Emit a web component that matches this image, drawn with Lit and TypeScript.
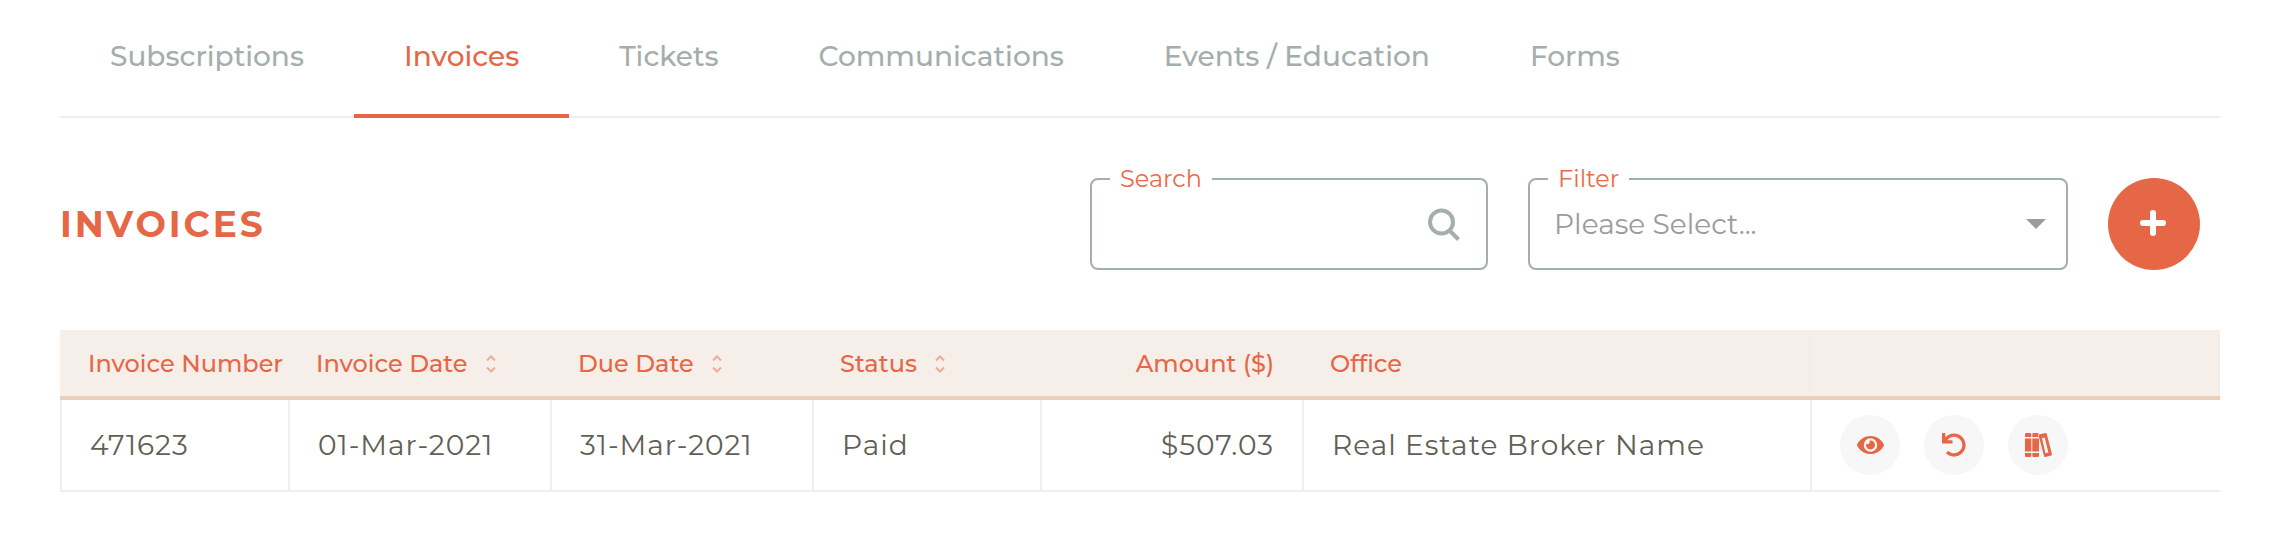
import { LitElement, html, css, svg } from "lit";
import { customElement, state } from "lit/decorators.js";
import { classMap } from "lit/directives/class-map.js";

const eye = svg`<path d="M572.52 241.4C518.29 135.59 410.93 64 288 64S57.68 135.64 3.48 241.41a32.35 32.35 0 0 0 0 29.19C57.71 376.41 165.07 448 288 448s230.32-71.64 284.52-177.41a32.35 32.35 0 0 0 0-29.19zM288 400a144 144 0 1 1 144-144 143.93 143.93 0 0 1-144 144zm0-240a95.31 95.31 0 0 0-25.31 3.79 47.85 47.85 0 0 1-66.9 66.9A95.78 95.78 0 1 0 288 160z"/>`;
const undo = svg`<path d="M212.333 224.333H12c-6.627 0-12-5.373-12-12V12C0 5.373 5.373 0 12 0h48c6.627 0 12 5.373 12 12v78.112C117.773 39.279 184.26 7.47 258.175 8.007c136.906.994 246.448 111.623 246.157 248.532C504.041 393.258 393.12 504 256.333 504c-64.089 0-122.496-24.313-166.51-64.215-5.099-4.622-5.334-12.554-.467-17.42l33.967-33.967c4.474-4.474 11.662-4.717 16.401-.525C170.76 415.336 211.58 432 256.333 432c97.268 0 176-78.716 176-176 0-97.267-78.716-176-176-176-58.496 0-110.28 28.476-142.274 72.333h98.274c6.627 0 12 5.373 12 12v48c0 6.627-5.373 12-12 12z"/>`;
const books = svg`<path fill-rule="evenodd" d="M1.300 0h3.700q1.300 0 1.300 1.300V4H0V1.300Q0 0 1.300 0zM0 5.500h6.300v13H0zM0 20h6.300v2.700q0 1.300-1.300 1.300H1.300Q0 24 0 22.700zM8.600 0h3.800q1.300 0 1.500 1.300L14 4H7.300V1.300Q7.300 0 8.600 0zM7.300 5.500h6.700v13H7.300zM7.300 20h6.700v2.700q0 1.300-1.300 1.300H8.600q-1.300 0-1.300-1.300zM12.500 1.800 20.500 0q.900-.1 1.200.8L27 21.200q.2.900-.7 1.200L20.300 24q-1 .2-1.200-.7L14 4zM17 5.200 20.500 20.200 23.400 19.500 19.700 4.500z"/>`;

@customElement("app-root")
export class AppRoot extends LitElement {
  static styles = css`
    :host {
      display: block;
      padding: 0 58px 64px 60px;
      background: #fff;
      color: #5f6056;
      font-family: Montserrat, Inter, sans-serif;
      font-size: 28px;
      line-height: 36px;
      --accent: #e66746;
      --muted: #a4aeab;
      --line: #eeeeee;
    }
    * { box-sizing: border-box; }
    button, input, select { font: inherit; color: inherit; border: 0; background: none; padding: 0; margin: 0; }
    button { cursor: pointer; }
    .tabs { display: flex; border-bottom: 2px solid var(--line); }
    .tab {
      padding: 38px 50px 40px;
      margin-bottom: -2px;
      border-bottom: 4px solid transparent;
      color: var(--muted);
      font-weight: 500;
      text-decoration: none;
      white-space: nowrap;
    }
    .active { color: var(--accent); border-bottom-color: var(--accent); }
    .toolbar { display: flex; align-items: flex-end; gap: 40px; padding: 47px 20px 60px 0; }
    .title {
      flex: 1;
      margin: 0;
      font-size: 36px;
      line-height: 92px;
      font-weight: 700;
      letter-spacing: 3px;
      color: var(--accent);
    }
    .field {
      display: grid;
      align-items: center;
      margin: 0;
      min-width: 0;
      padding: 0;
      border: 2px solid var(--muted);
      border-radius: 8px;
    }
    .search { width: 398px; }
    .filter { width: 540px; }
    .legend { margin-left: 18px; padding: 0 10px; font-size: 24px; line-height: 28px; color: #ed6a4a; }
    .control { grid-area: 1 / 1; width: 100%; height: 75px; padding: 0 24px 14px; outline: 0; }
    .select { appearance: none; color: #9b9b9b; }
    .adorn { grid-area: 1 / 1; justify-self: end; margin: 0 20px 14px 0; pointer-events: none; }
    .lens { margin-right: 26px; }
    .add {
      display: grid;
      place-items: center;
      width: 92px;
      height: 92px;
      border-radius: 50%;
      background: var(--accent);
    }
    .table { width: 100%; table-layout: fixed; border-collapse: separate; border-spacing: 0; }
    .c-s { width: 228px; }
    .c-m { width: 262px; }
    .c-l { width: 508px; }
    .th {
      height: 70px;
      padding: 2px 28px 0;
      background: #f6eee9;
      border-bottom: 4px solid #eacfb9;
      color: var(--accent);
      font-size: 24px;
      font-weight: 500;
      text-align: left;
      white-space: nowrap;
    }
    .th:nth-last-child(-n + 2) { box-shadow: inset -2px 0 #f1eeea; }
    .td {
      height: 92px;
      padding: 0 28px;
      border-left: 2px solid var(--line);
      border-bottom: 2px solid var(--line);
      letter-spacing: 1px;
      white-space: nowrap;
    }
    .num { text-align: right; }
    .sort { display: flex; align-items: center; gap: 18px; font-weight: 500; }
    .actions { display: flex; gap: 24px; }
    .action {
      display: grid;
      place-items: center;
      width: 60px;
      height: 60px;
      border-radius: 50%;
      background: #f7f7f7;
      color: var(--accent);
    }
    .icon { display: block; fill: currentColor; }
  `;

  @state() private tab = "Invoices";

  private tabs = ["Subscriptions", "Invoices", "Tickets", "Communications", "Events / Education", "Forms"];

  private sortable(name: string) {
    return html`<th class="th" scope="col">
      <button class="sort" type="button">
        ${name}
        <svg width="10" height="18" viewBox="0 0 10 18" fill="none" stroke="#f0ab98" stroke-width="2" aria-hidden="true">
          <path d="M1 5.500 5 1.500 9 5.500M1 12.500 5 16.500 9 12.500" />
        </svg>
      </button>
    </th>`;
  }

  private action(label: string, viewBox: string, width: number, shape: unknown) {
    return html`<button class="action" type="button" aria-label=${label}>
      <svg class="icon" width=${width} height="24" viewBox=${viewBox}>${shape}</svg>
    </button>`;
  }

  render() {
    return html`
      <nav class="tabs">
        ${this.tabs.map(
          (t) => html`<a
            class=${classMap({ tab: true, active: t === this.tab })}
            href="#"
            @click=${(e: Event) => { e.preventDefault(); this.tab = t; }}
            >${t}</a
          >`
        )}
      </nav>
      <div class="toolbar">
        <h1 class="title">INVOICES</h1>
        <fieldset class="field search">
          <legend class="legend"><label for="search">Search</label></legend>
          <input class="control" id="search" type="text" />
          <svg class="adorn lens" width="34" height="34" viewBox="0 0 34 34" fill="none" stroke="#a4aeab" stroke-width="4" aria-hidden="true">
            <circle cx="15.500" cy="15" r="11.500" />
            <path d="M23.500 23.500 32.500 32.500" />
          </svg>
        </fieldset>
        <fieldset class="field filter">
          <legend class="legend"><label for="filter">Filter</label></legend>
          <select class="control select" id="filter">
            <option>Please Select...</option>
          </select>
          <svg class="adorn" width="20" height="10" viewBox="0 0 20 10" fill="#9b9b9b" aria-hidden="true">
            <path d="M0 0h20L10 10z" />
          </svg>
        </fieldset>
        <button class="add" type="button" aria-label="Add invoice">
          <svg width="28" height="28" viewBox="0 0 28 28" stroke="#fff" stroke-width="6" stroke-linecap="round" aria-hidden="true">
            <path d="M13 3v20M3 13h20" />
          </svg>
        </button>
      </div>
      <table class="table">
        <colgroup>
          <col class="c-s" /><col class="c-m" /><col class="c-m" /><col class="c-s" /><col class="c-m" /><col class="c-l" /><col />
        </colgroup>
        <thead>
          <tr>
            <th class="th" scope="col">Invoice Number</th>
            ${this.sortable("Invoice Date")} ${this.sortable("Due Date")} ${this.sortable("Status")}
            <th class="th num" scope="col">Amount ($)</th>
            <th class="th" scope="col">Office</th>
            <th class="th"></th>
          </tr>
        </thead>
        <tbody>
          <tr>
            <td class="td">471623</td>
            <td class="td">01-Mar-2021</td>
            <td class="td">31-Mar-2021</td>
            <td class="td">Paid</td>
            <td class="td num">$507.03</td>
            <td class="td">Real Estate Broker Name</td>
            <td class="td">
              <div class="actions">
                ${this.action("View", "0 0 576 512", 27, eye)}
                ${this.action("Undo", "0 0 512 512", 24, undo)}
                ${this.action("Ledger", "0 0 27 24", 27, books)}
              </div>
            </td>
          </tr>
        </tbody>
      </table>
    `;
  }
}
